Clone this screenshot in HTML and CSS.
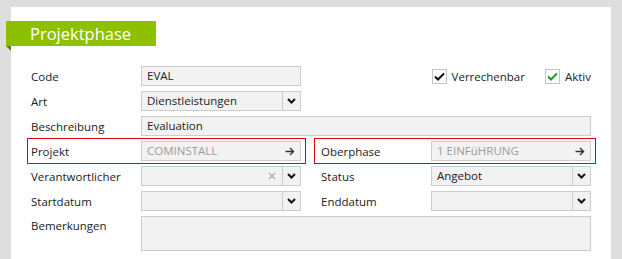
FILE: index.html
```html
<!DOCTYPE html>
<html lang="de">
<head>
  <meta charset="UTF-8">
  <title>Projektphase</title>
  <link rel="stylesheet" href="styles.css">
</head>
<body>
<div class="panel">
  <div class="panel-title">Projektphase</div>

  <div class="form">
    <div class="field">
      <label>Code</label>
      <div class="input">EVAL</div>
    </div>
    <div class="checks">
      <span class="check"><span class="box"><svg width="11" height="9" viewBox="0 0 11 9"><path d="M1 4.5 L4 7.5 L10 1.5" fill="none" stroke="#111" stroke-width="2"/></svg></span>Verrechenbar</span>
      <span class="check"><span class="box"><svg width="11" height="9" viewBox="0 0 11 9"><path d="M1 4.5 L4 7.5 L10 1.5" fill="none" stroke="#1e9a1e" stroke-width="2"/></svg></span>Aktiv</span>
    </div>

    <div class="field">
      <label>Art</label>
      <div class="input select">
        <span class="value">Dienstleistungen</span>
        <span class="drop"><svg width="9" height="6" viewBox="0 0 9 6"><path d="M1 1 L4.5 4.5 L8 1" fill="none" stroke="#111" stroke-width="2"/></svg></span>
      </div>
    </div>
    <div></div>

    <div class="field wide">
      <label>Beschreibung</label>
      <div class="input">Evaluation</div>
    </div>

    <div class="field marked">
      <label>Projekt</label>
      <div class="input link">
        <span class="value muted">COMINSTALL</span>
        <span class="go"><svg width="10" height="9" viewBox="0 0 10 9"><path d="M0.5 4.5 H8.5 M5 1 L8.5 4.5 L5 8" fill="none" stroke="#333" stroke-width="1.4"/></svg></span>
      </div>
    </div>
    <div class="field marked right">
      <label>Oberphase</label>
      <div class="input link">
        <span class="value muted">1 EINFüHRUNG</span>
        <span class="go"><svg width="10" height="9" viewBox="0 0 10 9"><path d="M0.5 4.5 H8.5 M5 1 L8.5 4.5 L5 8" fill="none" stroke="#333" stroke-width="1.4"/></svg></span>
      </div>
    </div>

    <div class="field">
      <label>Verantwortlicher</label>
      <div class="input select">
        <span class="value"></span>
        <span class="clear"><svg width="8" height="8" viewBox="0 0 8 8"><path d="M1 1 L7 7 M7 1 L1 7" fill="none" stroke="#aaa" stroke-width="1.1"/></svg></span>
        <span class="drop"><svg width="9" height="6" viewBox="0 0 9 6"><path d="M1 1 L4.5 4.5 L8 1" fill="none" stroke="#111" stroke-width="2"/></svg></span>
      </div>
    </div>
    <div class="field">
      <label>Status</label>
      <div class="input select">
        <span class="value">Angebot</span>
        <span class="drop"><svg width="9" height="6" viewBox="0 0 9 6"><path d="M1 1 L4.5 4.5 L8 1" fill="none" stroke="#111" stroke-width="2"/></svg></span>
      </div>
    </div>

    <div class="field">
      <label>Startdatum</label>
      <div class="input select">
        <span class="value"></span>
        <span class="drop"><svg width="9" height="6" viewBox="0 0 9 6"><path d="M1 1 L4.5 4.5 L8 1" fill="none" stroke="#111" stroke-width="2"/></svg></span>
      </div>
    </div>
    <div class="field">
      <label>Enddatum</label>
      <div class="input select">
        <span class="value"></span>
        <span class="drop"><svg width="9" height="6" viewBox="0 0 9 6"><path d="M1 1 L4.5 4.5 L8 1" fill="none" stroke="#111" stroke-width="2"/></svg></span>
      </div>
    </div>

    <div class="field wide tall">
      <label>Bemerkungen</label>
      <div class="input"></div>
    </div>
  </div>
</div>
</body>
</html>
```

FILE: styles.css
```css
html, body {
  height: 100%;
}
body {
  margin: 0;
  padding: 7px 11px 0 11px;
  box-sizing: border-box;
  background-color: #dedede;
  font-family: 'Open Sans', 'Segoe UI', sans-serif;
  font-size: 11.5px;
  color: #222;
  overflow: hidden;
}
.panel {
  background-color: white;
  height: 100%;
  box-sizing: border-box;
  padding: 14px 20px 0 20px;
}
.panel-title {
  position: relative;
  width: 126px;
  height: 25px;
  margin-left: -25px;
  padding-left: 24px;
  background-color: #8cc000;
  color: white;
  font-size: 16.5px;
  line-height: 25px;
}
.panel-title::after {
  content: '';
  position: absolute;
  left: 0;
  top: 25px;
  border-top: 5px solid #5f8200;
  border-left: 5px solid transparent;
}
.form {
  display: grid;
  grid-template-columns: 270px 270px;
  grid-auto-rows: 20px;
  column-gap: 20px;
  row-gap: 5px;
  margin-top: 20px;
}
.field {
  display: flex;
  align-items: center;
  position: relative;
}
.field label {
  width: 110px;
  flex-shrink: 0;
}
.field.wide {
  grid-column: 1 / -1;
}
.field.tall {
  grid-row: span 2;
  height: 35px;
  align-items: flex-start;
}
.field.tall label {
  padding-top: 2px;
}
.field.marked::before {
  content: '';
  position: absolute;
  top: -3px;
  bottom: -3px;
  left: -4px;
  right: -5px;
  border: 1px solid #e3000f;
}
.field.marked.right::before {
  left: -7px;
}
.input {
  flex: 1;
  height: 20px;
  box-sizing: border-box;
  border: 1px solid #cdcdcd;
  background-color: #f2f2f2;
  padding: 0 5px;
  line-height: 18px;
  display: flex;
  align-items: center;
}
.tall .input {
  height: 35px;
}
.value {
  flex: 1;
  white-space: nowrap;
}
.muted {
  color: #9b9b9b;
}
.select {
  padding-right: 0;
}
.drop {
  width: 17px;
  height: 18px;
  border-left: 1px solid #cdcdcd;
  display: flex;
  align-items: center;
  justify-content: center;
}
.clear {
  display: flex;
  margin-right: 6px;
}
.go {
  display: flex;
}
.checks {
  display: flex;
  justify-content: flex-end;
  align-items: center;
  gap: 20px;
}
.check {
  display: flex;
  align-items: center;
}
.box {
  width: 15px;
  height: 15px;
  box-sizing: border-box;
  border: 1px solid #c4c4c4;
  background-color: white;
  margin-right: 5px;
  display: flex;
  align-items: center;
  justify-content: center;
}
```
